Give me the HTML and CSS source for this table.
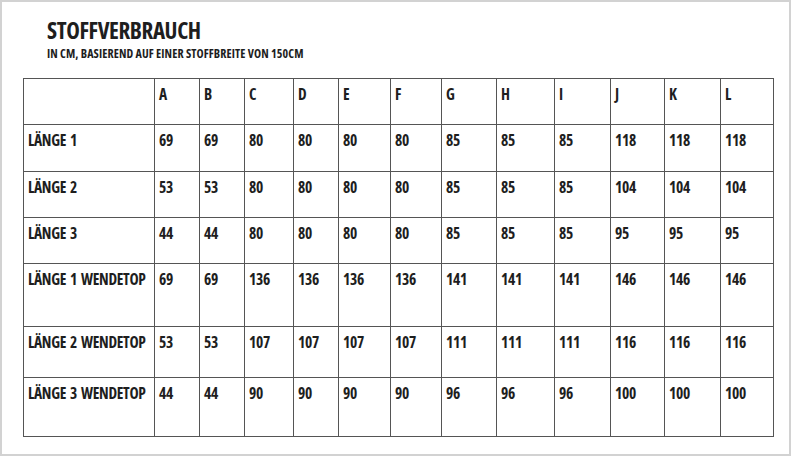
FILE: index.html
```html
<!DOCTYPE html>
<html lang="de">
<head>
<meta charset="utf-8">
<title>Stoffverbrauch</title>
<link rel="stylesheet" href="styles.css">
</head>
<body>
<div class="frame">
  <h1 class="title">STOFFVERBRAUCH</h1>
  <p class="subtitle">IN CM, BASIEREND AUF EINER STOFFBREITE VON 150CM</p>
  <table class="grid">
    <colgroup>
      <col class="c0"><col class="c1"><col class="c2"><col class="c3"><col class="c4"><col class="c5"><col class="c6"><col class="c7"><col class="c8"><col class="c9"><col class="c10"><col class="c11"><col class="c12">
    </colgroup>
    <tr class="r0"><td></td><td>A</td><td>B</td><td>C</td><td>D</td><td>E</td><td>F</td><td>G</td><td>H</td><td>I</td><td>J</td><td>K</td><td>L</td></tr>
    <tr class="r1"><td>LÄNGE 1</td><td>69</td><td>69</td><td>80</td><td>80</td><td>80</td><td>80</td><td>85</td><td>85</td><td>85</td><td>118</td><td>118</td><td>118</td></tr>
    <tr class="r2"><td>LÄNGE 2</td><td>53</td><td>53</td><td>80</td><td>80</td><td>80</td><td>80</td><td>85</td><td>85</td><td>85</td><td>104</td><td>104</td><td>104</td></tr>
    <tr class="r3"><td>LÄNGE 3</td><td>44</td><td>44</td><td>80</td><td>80</td><td>80</td><td>80</td><td>85</td><td>85</td><td>85</td><td>95</td><td>95</td><td>95</td></tr>
    <tr class="r4"><td>LÄNGE 1 WENDETOP</td><td>69</td><td>69</td><td>136</td><td>136</td><td>136</td><td>136</td><td>141</td><td>141</td><td>141</td><td>146</td><td>146</td><td>146</td></tr>
    <tr class="r5"><td>LÄNGE 2 WENDETOP</td><td>53</td><td>53</td><td>107</td><td>107</td><td>107</td><td>107</td><td>111</td><td>111</td><td>111</td><td>116</td><td>116</td><td>116</td></tr>
    <tr class="r6"><td>LÄNGE 3 WENDETOP</td><td>44</td><td>44</td><td>90</td><td>90</td><td>90</td><td>90</td><td>96</td><td>96</td><td>96</td><td>100</td><td>100</td><td>100</td></tr>
  </table>
</div>
</body>
</html>
```
FILE: styles.css
```css
html, body {
  margin: 0;
  padding: 0;
  background: #ffffff;
}
.frame {
  box-sizing: border-box;
  width: 791px;
  height: 456px;
  border: 2px solid #d2d2d2;
  padding: 15px 0 0 21px;
  font-family: "Open Sans", "DejaVu Sans", sans-serif;
  font-stretch: 75%;
  font-weight: 700;
  color: #1e1e1e;
}
.title {
  margin: 0 0 0 24px;
  font-size: 23px;
  line-height: 26px;
  font-weight: 700;
  letter-spacing: -0.4px;
  word-spacing: 1px;
}
.subtitle {
  margin: 4px 0 0 24px;
  font-size: 12px;
  line-height: 14px;
  letter-spacing: 0.1px;
}
.grid {
  margin-top: 17px;
  border-collapse: collapse;
  table-layout: fixed;
  width: 750px;
}
.grid td {
  border: 1px solid #555;
  padding: 6px 0 0 4px;
  vertical-align: top;
  font-size: 15.5px;
  line-height: 18px;
  letter-spacing: -0.3px;
  word-spacing: 1.5px;
  white-space: nowrap;
}
.c0 { width: 131px; }
.c1 { width: 45px; }
.c2 { width: 45px; }
.c3 { width: 49px; }
.c4 { width: 45px; }
.c5 { width: 52px; }
.c6 { width: 51px; }
.c7 { width: 55px; }
.c8 { width: 58px; }
.c9 { width: 56px; }
.c10 { width: 54px; }
.c11 { width: 56px; }
.c12 { width: 53px; }
.r0 { height: 46px; }
.r1 { height: 47px; }
.r2 { height: 46px; }
.r3 { height: 46px; }
.r4 { height: 63px; }
.r5 { height: 51px; }
.r6 { height: 59px; }
```
